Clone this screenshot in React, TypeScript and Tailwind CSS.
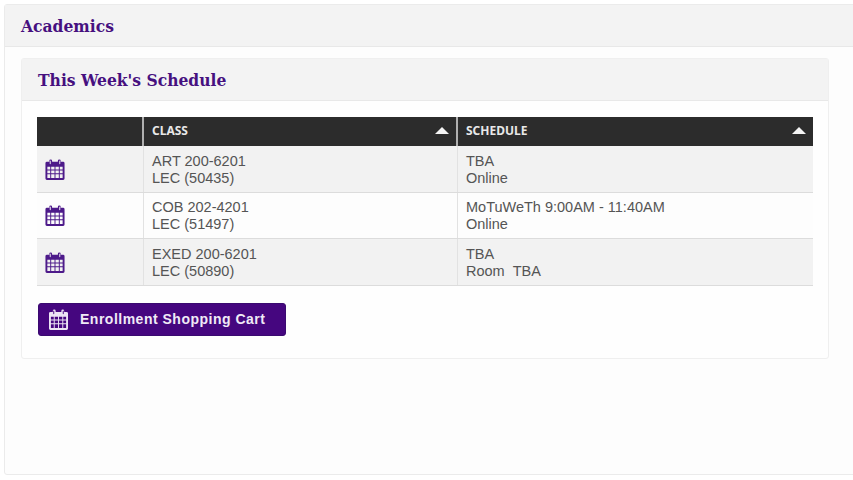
const rows = [
  { klass: 'ART 200-6201', section: 'LEC (50435)', time: 'TBA', room: 'Online', bg: 'h-[47px] bg-[#f2f2f2]', nudge: 'pt-px' },
  { klass: 'COB 202-4201', section: 'LEC (51497)', time: 'MoTuWeTh 9:00AM - 11:40AM', room: 'Online', bg: 'h-[46px] bg-[#fdfdfd]', nudge: '' },
  { klass: 'EXED 200-6201', section: 'LEC (50890)', time: 'TBA', room: 'Room\u00a0\u00a0TBA', bg: 'h-[47px] bg-[#f2f2f2]', nudge: 'pt-px' },
]

const CalendarIcon = ({ className }: { className: string }) => (
  <svg viewBox="0 0 20 22" className={className} fill="currentColor">
    <path
      fillRule="evenodd"
      d="M1.5 3H4V2a1.5 1.5 0 0 1 3 0v1h6V2a1.5 1.5 0 0 1 3 0v1h2.5A1.5 1.5 0 0 1 20 4.5v16a1.5 1.5 0 0 1-1.5 1.5h-17A1.5 1.5 0 0 1 0 20.500v-16A1.500 1.500 0 0 1 1.500 3ZM5 1.500a.5.5 0 0 0-.5.5v3a.5.5 0 0 0 1 0V2a.5.5 0 0 0-.5-.5Zm10 0a.5.5 0 0 0-.5.5v3a.5.5 0 0 0 1 0V2a.5.500 0 0 0-.5-.5ZM2 8v3h3V8H2Zm4 0v3h3.500V8H6Zm4.500 0v3H14V8h-3.500ZM15 8v3h3V8h-3ZM2 12v3h3v-3H2Zm4 0v3h3.500v-3H6Zm4.500 0v3H14v-3h-3.500ZM15 12v3h3v-3h-3ZM2 16v4h3v-4H2Zm4 0v4h3.500v-4H6Zm4.500 0v4H14v-4h-3.500ZM15 16v4h3v-4h-3Z"
    />
  </svg>
)

const Caret = () => <span className="h-0 w-0 border-x-[7px] border-b-[7px] border-x-transparent border-b-[#f4f4f4]" />

export default function App() {
  return (
    <div className="h-[480px] w-[853px] overflow-hidden bg-white pl-1 pt-1 font-['Liberation_Sans',sans-serif] text-[14.5px] leading-[17px] text-[#555555]">
      <section className="h-[471px] w-[860px] rounded-[3px] border border-[#ebebeb] bg-[#fdfdfd]">
        <header className="flex h-[42px] items-center border-b border-[#e8e8e8] bg-[#f3f3f3] pl-4 pt-0.5 font-['DejaVu_Serif_Condensed','DejaVu_Serif',serif] text-[17.300px] font-bold text-[#46107f]">
          Academics
        </header>
        <div className="ml-4 mt-[11px] h-[301px] w-[808px] rounded-[3px] border border-[#efefef] bg-[#fefefe]">
          <header className="flex h-[42px] items-center border-b border-[#e8e8e8] bg-[#f3f3f3] pl-4 pt-0.5 font-['DejaVu_Serif_Condensed','DejaVu_Serif',serif] text-[17.300px] font-bold text-[#46107f]">
            This Week's Schedule
          </header>
          <div className="ml-[15px] mt-4 w-[776px]">
            <div className="grid h-[29px] grid-cols-[105px_314px_357px] bg-[#2c2c2c] font-['Noto_Sans',sans-serif] text-[12px] font-bold text-[#e8e8e8]">
              <div />
              <div className="flex items-center justify-between border-l-2 border-[#b0b0b0] pb-0.5 pl-2 pr-[7px]">
                CLASS
                <Caret />
              </div>
              <div className="flex items-center justify-between border-l-2 border-[#b0b0b0] pb-0.5 pl-2 pr-[7px]">
                SCHEDULE
                <Caret />
              </div>
            </div>
            {rows.map((row) => (
              <div key={row.klass} className={`grid grid-cols-[106px_314px_356px] border-b border-[#dcdcdc] ${row.bg}`}>
                <div className="flex items-center pl-2">
                  <CalendarIcon className="h-[21px] w-5 text-[#4d1a8a]" />
                </div>
                <div className={`flex flex-col justify-center border-l border-[#e2e2e2] pl-2 ${row.nudge}`}>
                  <span>{row.klass}</span>
                  <span>{row.section}</span>
                </div>
                <div className={`flex flex-col justify-center border-l border-[#e2e2e2] pl-2 ${row.nudge}`}>
                  <span>{row.time}</span>
                  <span>{row.room}</span>
                </div>
              </div>
            ))}
          </div>
          <button className="ml-4 mt-[17px] flex h-[33px] w-[248px] items-center gap-[12px] rounded-[3px] border border-[#3a0a70] bg-[#45067f] pl-[10px] text-[14px] font-bold tracking-[0.5px] text-[#f0eaf6]">
            <CalendarIcon className="h-[21px] w-[19px] text-[#ece4f4]" />
            Enrollment Shopping Cart
          </button>
        </div>
      </section>
    </div>
  )
}
